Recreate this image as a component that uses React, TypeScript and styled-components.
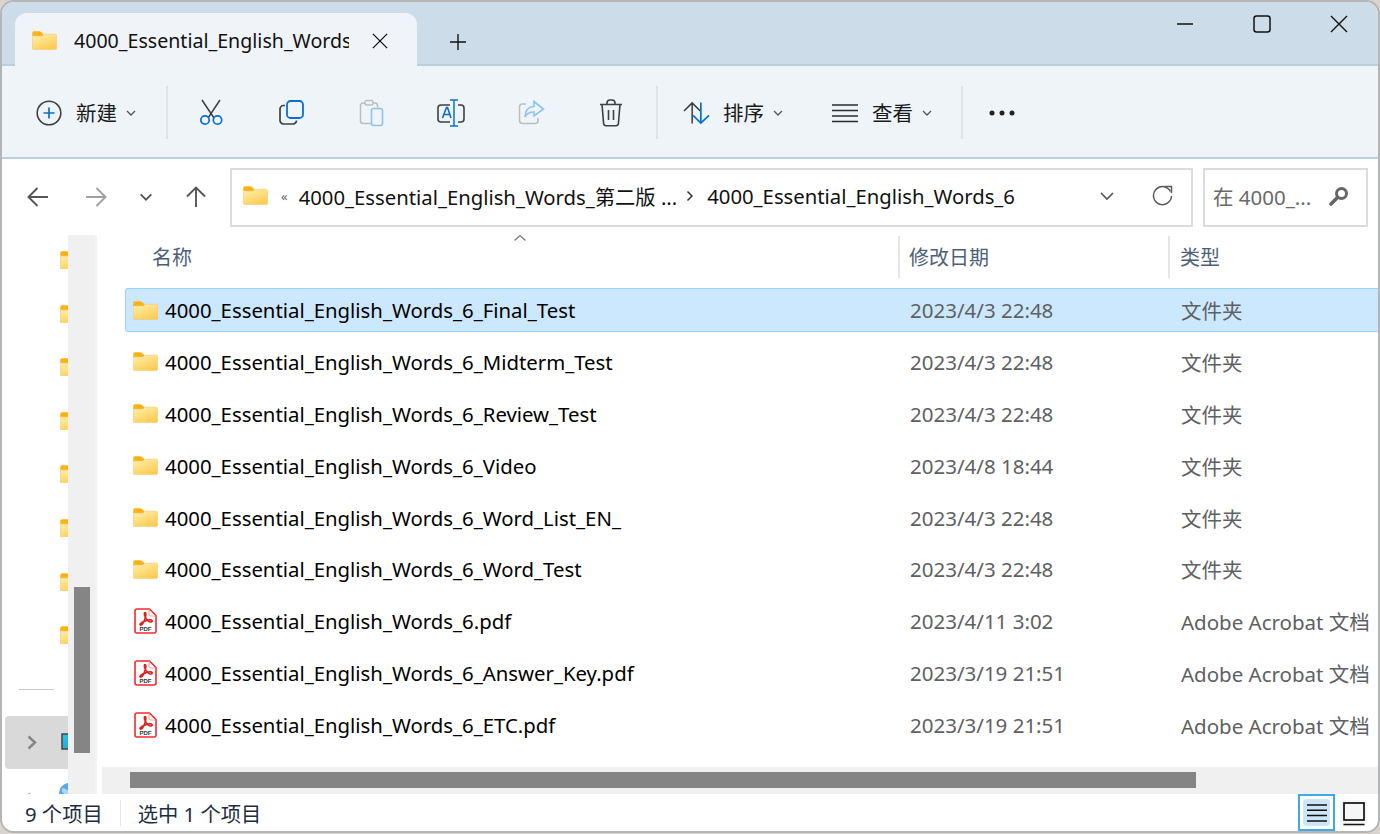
import React from "react";
import styled, { createGlobalStyle } from "styled-components";

const FONT = `"Noto Sans", "Noto Sans CJK SC", sans-serif`;

const Global = createGlobalStyle`
  html, body { margin: 0; padding: 0; background: #d9d4cf; }
  body { width: 1380px; height: 834px; overflow: hidden; font-family: ${FONT}; }
  #root { width: 1380px; height: 834px; }
`;

const Win = styled.div`
  width: 1380px;
  height: 833px;
  box-sizing: border-box;
  border: 2px solid #b3b5b6;
  border-radius: 14px;
  overflow: hidden;
  background: #fff;
  display: flex;
  flex-direction: column;
`;
const TitleBar = styled.div`
  height: 64px;
  flex: none;
  background: #ccdde9;
  display: flex;
  align-items: flex-end;
  padding-left: 13px;
  box-sizing: border-box;
  border-bottom: 2px solid #bccfdd;
`;
const Tab = styled.div`
  width: 402px;
  height: 53px;
  margin-bottom: -2px;
  background: #f0f4f9;
  border-radius: 12px 12px 0 0;
  display: flex;
  align-items: center;
  padding: 2px 0 0 17px;
  box-sizing: border-box;
`;
const TabTitle = styled.div`
  width: 275px;
  margin-left: 17px;
  font-size: 19.6px;
  color: #111;
  overflow: hidden;
  white-space: nowrap;
`;
const IconBtn = styled.div<{ $w?: number; $ml?: number }>`
  width: ${(p) => p.$w ?? 24}px;
  margin-left: ${(p) => p.$ml ?? 0}px;
  display: flex;
  align-items: center;
  justify-content: center;
  flex: none;
`;
const NewTab = styled(IconBtn)`
  align-self: center;
  margin-top: 17px;
`;
const Caption = styled.div`
  margin-left: auto;
  align-self: flex-start;
  display: flex;
  padding-top: 13px;
  padding-right: 30px;
  gap: 59px;
`;
const Toolbar = styled.div`
  height: 93px;
  flex: none;
  background: #eff4f9;
  border-bottom: 2px solid #bccfdd;
  box-sizing: border-box;
  display: flex;
  align-items: center;
  padding-top: 2px;
`;
const Divider = styled.div<{ $ml: number }>`
  width: 2px;
  height: 53px;
  background: #dfe4e8;
  margin-left: ${(p) => p.$ml}px;
  flex: none;
`;
const MenuBtn = styled.div<{ $ml: number }>`
  display: flex;
  align-items: center;
  margin-left: ${(p) => p.$ml}px;
  flex: none;
`;
const MenuLabel = styled.span<{ $ml: number }>`
  font-size: 20.5px;
  color: #1a1a1a;
  margin: 0 8px 0 ${(p) => p.$ml}px;
  line-height: 26px;
`;
const AddressRow = styled.div`
  height: 76px;
  flex: none;
  display: flex;
  align-items: center;
  background: #fff;
`;
const Box = styled.div<{ $w: number; $ml: number }>`
  width: ${(p) => p.$w}px;
  margin-left: ${(p) => p.$ml}px;
  height: 59px;
  padding-bottom: 3px;
  border: 2px solid #dcdcdc;
  box-sizing: border-box;
  display: flex;
  align-items: center;
  flex: none;
`;
const Crumb = styled.span<{ $ml?: number }>`
  font-size: 20.3px;
  color: #111;
  white-space: nowrap;
  margin-left: ${(p) => p.$ml ?? 0}px;
`;
const Quote = styled.span`
  font-size: 13px;
  color: #666;
  margin-left: 13px;
  margin-right: 11px;
`;
const SearchText = styled.span`
  font-size: 20.5px;
  color: #6a6a6a;
  margin-left: 8px;
  white-space: nowrap;
`;
const Main = styled.div`
  flex: 1;
  min-height: 0;
  display: flex;
`;
const Nav = styled.div`
  width: 66px;
  flex: none;
  overflow: hidden;
  display: flex;
  flex-direction: column;
  background: #fff;
`;
const NavFolders = styled.div`
  flex: none;
  display: flex;
  flex-direction: column;
  gap: 35.6px;
  padding: 16px 0 0 58px;
`;
const NavClip = styled.div`
  width: 8px;
  flex: none;
  overflow: hidden;
  height: 18px;
`;
const NavRule = styled.div`
  width: 35px;
  height: 1px;
  flex: none;
  background: #c9c9c9;
  margin: 45px 0 0 17px;
`;
const NavCurrent = styled.div`
  height: 53px;
  flex: none;
  margin: 26px 0 0 3px;
  background: #d9d9d9;
  border-radius: 4px 0 0 4px;
  display: flex;
  align-items: center;
  padding-left: 21.5px;
  gap: 24px;
  overflow: hidden;
  & > svg {
    flex: none;
  }
`;
const NavNext = styled.div`
  flex: none;
  display: flex;
  align-items: flex-start;
  padding: 13px 0 0 25px;
  gap: 21px;
  & > svg {
    flex: none;
  }
`;
const NavNextChevron = styled.div`
  flex: none;
  margin-top: 8px;
  opacity: 0.75;
`;
const VScroll = styled.div`
  width: 27px;
  flex: none;
  background: #f0f0f0;
  display: flex;
  flex-direction: column;
  align-items: center;
  padding-top: 352px;
  box-sizing: border-box;
`;
const VThumb = styled.div`
  width: 16px;
  height: 166px;
  flex: none;
  background: #858585;
`;
const Gutter = styled.div`
  width: 7px;
  flex: none;
  background: #fff;
  border-left: 2px solid #f4f4f4;
  box-sizing: border-box;
`;
const Content = styled.div`
  flex: 1;
  min-width: 0;
  display: flex;
  flex-direction: column;
  position: relative;
`;
const Header = styled.div`
  height: 53px;
  flex: none;
  display: grid;
  grid-template-columns: 796px 270px 1fr;
  align-items: center;
`;
const HeadCell = styled.div<{ $pl: number; $rule?: boolean }>`
  height: 42px;
  display: flex;
  align-items: center;
  padding-left: ${(p) => p.$pl}px;
  font-size: 20px;
  color: #4d6078;
  border-left: ${(p) => (p.$rule ? "2px solid #e5e5e5" : "none")};
  margin-top: -10px;
`;
const SortCaret = styled.svg`
  position: absolute;
  left: 411px;
  top: -1px;
`;
const Rows = styled.div`
  flex: 1;
  display: flex;
  flex-direction: column;
  gap: 7.9px;
  padding-left: 23px;
`;
const Row = styled.div<{ $sel?: boolean }>`
  height: 44px;
  box-sizing: border-box;
  display: grid;
  grid-template-columns: 784px 271px 1fr;
  align-items: center;
  background: ${(p) => (p.$sel ? "#cce8ff" : "transparent")};
  border: 1px solid ${(p) => (p.$sel ? "#99d1ff" : "transparent")};
  border-right: 0;
  border-radius: 3px 0 0 3px;
  white-space: nowrap;
`;
const NameCell = styled.div`
  display: flex;
  align-items: center;
  padding-left: 7px;
  gap: 7px;
  font-size: 20.35px;
  color: #000;
`;
const IconSlot = styled.div`
  width: 25px;
  display: flex;
  justify-content: center;
  flex: none;
`;
const Meta = styled.div`
  font-size: 20.5px;
  color: #5e6063;
  overflow: hidden;
`;
const HScroll = styled.div`
  height: 27px;
  flex: none;
  background: #f0f0f0;
  padding: 5px 0 0 28px;
  box-sizing: border-box;
`;
const HThumb = styled.div`
  width: 1066px;
  height: 16px;
  background: #858585;
`;
const Status = styled.div`
  height: 37px;
  flex: none;
  display: flex;
  align-items: center;
  background: #fff;
  font-size: 20.3px;
  color: #1d2c3f;
`;
const StatusText = styled.span<{ $ml: number }>`
  margin-left: ${(p) => p.$ml}px;
  white-space: nowrap;
`;
const StatusRule = styled.div`
  width: 1px;
  height: 26px;
  background: #e6e6e6;
  margin-left: 17px;
`;
const Views = styled.div`
  margin-left: auto;
  margin-right: 11px;
  display: flex;
  align-items: flex-start;
  align-self: flex-start;
  gap: 5px;
`;
const ViewOn = styled.div`
  width: 37px;
  height: 37px;
  box-sizing: border-box;
  border: 2px solid #40a9ec;
  display: flex;
  align-items: center;
  justify-content: center;
`;
const ViewOnInner = styled.div`
  width: 27px;
  height: 27px;
  border-radius: 4px;
  background: #cde6f7;
  display: flex;
  align-items: center;
  justify-content: center;
`;
const ViewOff = styled.div`
  width: 27px;
  height: 27px;
  margin-top: 6px;
  border-radius: 4px;
  background: #f6f6f6;
  display: flex;
  align-items: center;
  justify-content: center;
`;

const Folder = ({ w = 25, id }: { w?: number; id: string }) => (
  <svg width={w} height={(w * 19) / 25} viewBox="0 0 25 19">
    <defs>
      <linearGradient id={id} x1="0.2" y1="0" x2="0.8" y2="1">
        <stop offset="0" stopColor="#ffeea6" />
        <stop offset="1" stopColor="#fcc94c" />
      </linearGradient>
    </defs>
    <path d="M0.3 2c0-1 .7-1.700 1.700-1.700h5.200c.8 0 1.300.3 1.800.8l2.800 2.400-1.800 1.500H.3z" fill="#fbb313" />
    <path d="M0.4 5h10.100l1.800-1.800H23.300c.7 0 1.300.6 1.300 1.300V17.300c0 .7-.6 1.300-1.300 1.300H1.700c-.7 0-1.300-.6-1.300-1.300z" fill={`url(#${id})`} stroke="#f0c878" strokeWidth=".6" />
  </svg>
);

const Pdf = () => (
  <svg width="23" height="26" viewBox="0 0 23 26">
    <path d="M3 1h12.500L22 7.500V23a2 2 0 0 1-2 2H3a2 2 0 0 1-2-2V3a2 2 0 0 1 2-2z" fill="#fff" stroke="#ef2b2b" strokeWidth="1.600" />
    <path d="M15 1.200V6a2 2 0 0 0 2 2h4.800" fill="none" stroke="#f9a0a0" strokeWidth="1" />
    <path d="M11 4.500c-1 0-.8 2.500.5 5 1 2 2.400 3.600 4 4.200 1.600.6 3 0 2.600-1-.5-1-3-1-5.500-.3-2.600.7-5.500 2.200-6.400 3.600-.6 1.100.6 1.600 1.600.6 1.400-1.400 3.200-5.500 3.900-8.600.4-1.800.2-3.500-.7-3.500z" fill="none" stroke="#e0201f" strokeWidth="1.600" />
    <text x="11.500" y="22.600" fontSize="6" fontWeight="700" fontFamily="Liberation Sans, sans-serif" textAnchor="middle" fill="#333">PDF</text>
  </svg>
);

const Chev = ({ s = 12, c = "#555", w = 1.300 }: { s?: number; c?: string; w?: number }) => (
  <svg width={s} height={s} viewBox="0 0 12 12">
    <path d="M2 4l4 4 4-4" fill="none" stroke={c} strokeWidth={w} />
  </svg>
);

const BLUE = "#0a6fd1";
const DARK = "#3f3f3f";

const PlusCircle = () => (
  <svg width="26" height="26" viewBox="0 0 26 26">
    <circle cx="13" cy="13" r="11.800" fill="none" stroke={DARK} strokeWidth="1.600" />
    <path d="M13 7.500v11M7.500 13h11" stroke={BLUE} strokeWidth="1.700" />
  </svg>
);
const Cut = () => (
  <svg width="24" height="27" viewBox="0 0 24 27">
    <path d="M3 1l12 18M21 1L9 19" stroke={DARK} strokeWidth="1.500" fill="none" />
    <circle cx="6" cy="21" r="4.200" fill="none" stroke={BLUE} strokeWidth="1.700" />
    <circle cx="18.500" cy="21" r="4.200" fill="none" stroke={BLUE} strokeWidth="1.700" />
  </svg>
);
const Copy = () => (
  <svg width="25" height="25" viewBox="0 0 25 25">
    <path d="M6 5.500H4.500A3.500 3.500 0 0 0 1 9v11.500A3.500 3.500 0 0 0 4.500 24H14a3.500 3.500 0 0 0 3.500-3.500" fill="none" stroke={DARK} strokeWidth="1.700" />
    <rect x="8" y="1" width="16" height="17" rx="3.500" fill="none" stroke={BLUE} strokeWidth="1.800" />
  </svg>
);
const Paste = () => (
  <svg width="25" height="28" viewBox="0 0 25 28">
    <path d="M12 24.500H4a2.500 2.500 0 0 1-2.500-2.500V6.500A2.500 2.500 0 0 1 4 4h12a2.500 2.500 0 0 1 2.500 2.500v2" fill="none" stroke="#bdbdbd" strokeWidth="1.500" />
    <rect x="6" y="1.500" width="8" height="4.500" rx="1.400" fill="#f0f4f9" stroke="#bdbdbd" strokeWidth="1.400" />
    <rect x="12.500" y="9.500" width="11" height="17" rx="2.200" fill="none" stroke="#8fc3ec" strokeWidth="1.600" />
  </svg>
);
const Rename = () => (
  <svg width="28" height="28" viewBox="0 0 28 28">
    <path d="M13 6H4a3 3 0 0 0-3 3v11a3 3 0 0 0 3 3h9M21 6h3a3 3 0 0 1 3 3v11a3 3 0 0 1-3 3h-3" fill="none" stroke={DARK} strokeWidth="1.600" />
    <path d="M13 1h8M17 1v26M13 27h8" stroke={BLUE} strokeWidth="1.500" fill="none" />
    <path d="M5.500 19l4-10.500h1L14 19M7 15.500h6" stroke={BLUE} strokeWidth="1.600" fill="none" />
  </svg>
);
const Share = () => (
  <svg width="27" height="25" viewBox="0 0 27 25">
    <path d="M8 4H4.500A3 3 0 0 0 1.500 7v13.500a3 3 0 0 0 3 3H17a3 3 0 0 0 3-3V18" fill="none" stroke="#bdbdbd" strokeWidth="1.500" />
    <path d="M16 1.500L25.500 9 16 16v-4c-4 0-7 1-9 5 0-6 3-10 9-10.500z" fill="none" stroke="#8fc3ec" strokeWidth="1.600" />
  </svg>
);
const Trash = () => (
  <svg width="24" height="28" viewBox="0 0 24 28">
    <path d="M1 5.500h22M8 5.500V4a3 3 0 0 1 3-3h2a3 3 0 0 1 3 3v1.500" fill="none" stroke={DARK} strokeWidth="1.600" />
    <path d="M3 5.500l1.600 19a2.500 2.500 0 0 0 2.500 2.200h9.800a2.500 2.500 0 0 0 2.500-2.200l1.600-19" fill="none" stroke={DARK} strokeWidth="1.600" />
    <path d="M9.500 11v10M14.500 11v10" stroke={DARK} strokeWidth="1.600" />
  </svg>
);
const Sort = () => (
  <svg width="27" height="24" viewBox="0 0 28 24">
    <path d="M9.500 23V2M1 10l8.500-8.500L18 10" fill="none" stroke={DARK} strokeWidth="1.600" />
    <path d="M18.500 1v21M10.500 14.500l8 8 8.500-8" fill="none" stroke={BLUE} strokeWidth="1.800" />
  </svg>
);
const Lines = () => (
  <svg width="28" height="20" viewBox="0 0 28 20">
    <path d="M1 2h26M1 7.500h26M1 13h26M1 18.500h26" stroke="#2b2b2b" strokeWidth="1.500" />
  </svg>
);
const Dots = () => (
  <svg width="26" height="6" viewBox="0 0 26 6">
    <circle cx="3" cy="3" r="2.500" fill="#222" />
    <circle cx="13" cy="3" r="2.500" fill="#222" />
    <circle cx="23" cy="3" r="2.500" fill="#222" />
  </svg>
);
const Close = ({ s = 18 }: { s?: number }) => (
  <svg width={s} height={s} viewBox="0 0 18 18">
    <path d="M1 1l16 16M17 1L1 17" stroke="#111" strokeWidth="1.400" />
  </svg>
);
const Plus = () => (
  <svg width="16" height="16" viewBox="0 0 16 16">
    <path d="M8 0v16M0 8h16" stroke="#111" strokeWidth="1.400" />
  </svg>
);
const Minimize = () => (
  <svg width="18" height="18" viewBox="0 0 18 18">
    <path d="M1 9h16" stroke="#111" strokeWidth="1.500" />
  </svg>
);
const Maximize = () => (
  <svg width="18" height="18" viewBox="0 0 18 18">
    <rect x="1" y="1" width="16" height="16" rx="2.500" fill="none" stroke="#111" strokeWidth="1.500" />
  </svg>
);
const arrowPaths = {
  l: "M21 11H1.500M10.500 2L1.500 11l9 9",
  r: "M1 11h19.500M11.500 2l9 9-9 9",
  u: "M11 21V1.500M2 10.500L11 1.500l9 9",
};
const Arrow = ({ dir, c }: { dir: "l" | "r" | "u"; c: string }) => (
  <svg width="22" height="22" viewBox="0 0 22 22">
    <path d={arrowPaths[dir]} fill="none" stroke={c} strokeWidth="1.900" />
  </svg>
);
const Refresh = () => (
  <svg width="21" height="21" viewBox="0 0 21 21">
    <path d="M18.500 6.500A9 9 0 1 0 19.500 11" fill="none" stroke="#5a5a5a" strokeWidth="1.500" />
    <path d="M12.500 1.500h7v6.500" fill="none" stroke="#5a5a5a" strokeWidth="1.500" />
  </svg>
);
const SearchIcon = () => (
  <svg width="20" height="20" viewBox="0 0 20 20">
    <circle cx="12.500" cy="7.500" r="5" fill="none" stroke="#666" strokeWidth="3" />
    <path d="M8.500 11.500L2 18" stroke="#666" strokeWidth="3.600" strokeLinecap="round" />
  </svg>
);
const NavChevron = () => (
  <svg width="10" height="15" viewBox="0 0 10 15">
    <path d="M1.500 1.500l6.500 6-6.500 6" fill="none" stroke="#858585" strokeWidth="2.400" />
  </svg>
);
const Pc = () => (
  <svg width="22" height="20" viewBox="0 0 22 20">
    <defs>
      <linearGradient id="pcg" x1="0" y1="0" x2="1" y2="1">
        <stop offset="0" stopColor="#28c8ea" />
        <stop offset="1" stopColor="#2b8fd8" />
      </linearGradient>
    </defs>
    <rect x="1" y="1" width="20" height="15" fill="url(#pcg)" stroke="#444" strokeWidth="1.500" />
    <rect x="7" y="17" width="8" height="2" fill="#555" />
  </svg>
);
const Globe = () => (
  <svg width="22" height="22" viewBox="0 0 22 22">
    <circle cx="11" cy="11" r="10" fill="#5ba8e6" />
    <path d="M4 6c3 0 4 2 6 2s1 4-1 5-3-2-5-3z" fill="#a9d7f4" />
  </svg>
);

const Details = () => (
  <svg width="22" height="20" viewBox="0 0 22 20">
    <path d="M1 2h20M1 7.300h20M1 12.600h20M1 18h20" stroke="#111" strokeWidth="1.500" />
  </svg>
);
const Large = () => (
  <svg width="22" height="24" viewBox="0 0 22 24">
    <rect x="1" y="1" width="20" height="17" fill="none" stroke="#111" strokeWidth="1.700" />
    <path d="M0.500 22.500h21" stroke="#111" strokeWidth="1.500" />
  </svg>
);

const rows = [
  { n: "4000_Essential_English_Words_6_Final_Test", d: "2023/4/3 22:48", t: "文件夹", sel: true },
  { n: "4000_Essential_English_Words_6_Midterm_Test", d: "2023/4/3 22:48", t: "文件夹" },
  { n: "4000_Essential_English_Words_6_Review_Test", d: "2023/4/3 22:48", t: "文件夹" },
  { n: "4000_Essential_English_Words_6_Video", d: "2023/4/8 18:44", t: "文件夹" },
  { n: "4000_Essential_English_Words_6_Word_List_EN_", d: "2023/4/3 22:48", t: "文件夹" },
  { n: "4000_Essential_English_Words_6_Word_Test", d: "2023/4/3 22:48", t: "文件夹" },
  { n: "4000_Essential_English_Words_6.pdf", d: "2023/4/11 3:02", t: "Adobe Acrobat 文档", pdf: true },
  { n: "4000_Essential_English_Words_6_Answer_Key.pdf", d: "2023/3/19 21:51", t: "Adobe Acrobat 文档", pdf: true },
  { n: "4000_Essential_English_Words_6_ETC.pdf", d: "2023/3/19 21:51", t: "Adobe Acrobat 文档", pdf: true },
];

export default function App() {
  return (
    <>
      <Global />
      <Win>
        <TitleBar>
          <Tab>
            <Folder id="ft" />
            <TabTitle>4000_Essential_English_Words_6</TabTitle>
            <IconBtn $w={16} $ml={23}><Close s={16} /></IconBtn>
          </Tab>
          <NewTab $w={16} $ml={33}><Plus /></NewTab>
          <Caption>
            <Minimize />
            <Maximize />
            <Close />
          </Caption>
        </TitleBar>
        <Toolbar>
          <MenuBtn $ml={34}><PlusCircle /><MenuLabel $ml={14}>新建</MenuLabel><Chev /></MenuBtn>
          <Divider $ml={29} />
          <IconBtn $w={80} $ml={3}><Cut /></IconBtn>
          <IconBtn $w={80}><Copy /></IconBtn>
          <IconBtn $w={80}><Paste /></IconBtn>
          <IconBtn $w={80}><Rename /></IconBtn>
          <IconBtn $w={80}><Share /></IconBtn>
          <IconBtn $w={80}><Trash /></IconBtn>
          <Divider $ml={5} />
          <MenuBtn $ml={25}><Sort /><MenuLabel $ml={13}>排序</MenuLabel><Chev /></MenuBtn>
          <MenuBtn $ml={47}><Lines /><MenuLabel $ml={13}>查看</MenuLabel><Chev /></MenuBtn>
          <Divider $ml={28} />
          <IconBtn $w={26} $ml={26}><Dots /></IconBtn>
        </Toolbar>
        <AddressRow>
          <IconBtn $w={22} $ml={25}><Arrow dir="l" c="#555" /></IconBtn>
          <IconBtn $w={22} $ml={36}><Arrow dir="r" c="#a0a0a0" /></IconBtn>
          <IconBtn $w={16} $ml={31}><Chev s={16} w={1.400} /></IconBtn>
          <IconBtn $w={22} $ml={31}><Arrow dir="u" c="#555" /></IconBtn>
          <Box $w={963} $ml={23}>
            <IconBtn $w={25} $ml={11}><Folder id="fa" /></IconBtn>
            <Quote>«</Quote>
            <Crumb>4000_Essential_English_Words_第二版 ...</Crumb>
            <IconBtn $w={10} $ml={8}><svg width="8" height="12" viewBox="0 0 8 12"><path d="M1.500 1.500L6 6l-4.500 4.500" fill="none" stroke="#333" strokeWidth="1.500" /></svg></IconBtn>
            <Crumb $ml={12}>4000_Essential_English_Words_6</Crumb>
            <IconBtn $w={18} $ml={83}><Chev s={18} w={1.100} /></IconBtn>
            <IconBtn $w={21} $ml={36}><Refresh /></IconBtn>
          </Box>
          <Box $w={165} $ml={10}>
            <SearchText>在 4000_...</SearchText>
            <IconBtn $w={20} $ml={18}><SearchIcon /></IconBtn>
          </Box>
        </AddressRow>
        <Main>
          <Nav>
            <NavFolders>
              {Array.from({ length: 8 }, (_, i) => (
                <NavClip key={i}><Folder id={`nf${i}`} /></NavClip>
              ))}
            </NavFolders>
            <NavRule />
            <NavCurrent><NavChevron /><Pc /></NavCurrent>
            <NavNext><NavNextChevron><NavChevron /></NavNextChevron><Globe /></NavNext>
          </Nav>
          <VScroll><VThumb /></VScroll>
          <Gutter />
          <Content>
            <SortCaret width="14" height="8" viewBox="0 0 14 8">
              <path d="M1.500 6.500L7 1.500l5.500 5" fill="none" stroke="#777" strokeWidth="1.200" />
            </SortCaret>
            <Header>
              <HeadCell $pl={50}>名称</HeadCell>
              <HeadCell $pl={9} $rule>修改日期</HeadCell>
              <HeadCell $pl={10} $rule>类型</HeadCell>
            </Header>
            <Rows>
              {rows.map((r, i) => (
                <Row key={r.n} $sel={r.sel}>
                  <NameCell>
                    <IconSlot>{r.pdf ? <Pdf /> : <Folder id={`fr${i}`} />}</IconSlot>
                    {r.n}
                  </NameCell>
                  <Meta>{r.d}</Meta>
                  <Meta>{r.t}</Meta>
                </Row>
              ))}
            </Rows>
            <HScroll><HThumb /></HScroll>
          </Content>
        </Main>
        <Status>
          <StatusText $ml={23}>9 个项目</StatusText>
          <StatusRule />
          <StatusText $ml={17}>选中 1 个项目</StatusText>
          <Views>
            <ViewOn><ViewOnInner><Details /></ViewOnInner></ViewOn>
            <ViewOff><Large /></ViewOff>
          </Views>
        </Status>
      </Win>
    </>
  );
}
